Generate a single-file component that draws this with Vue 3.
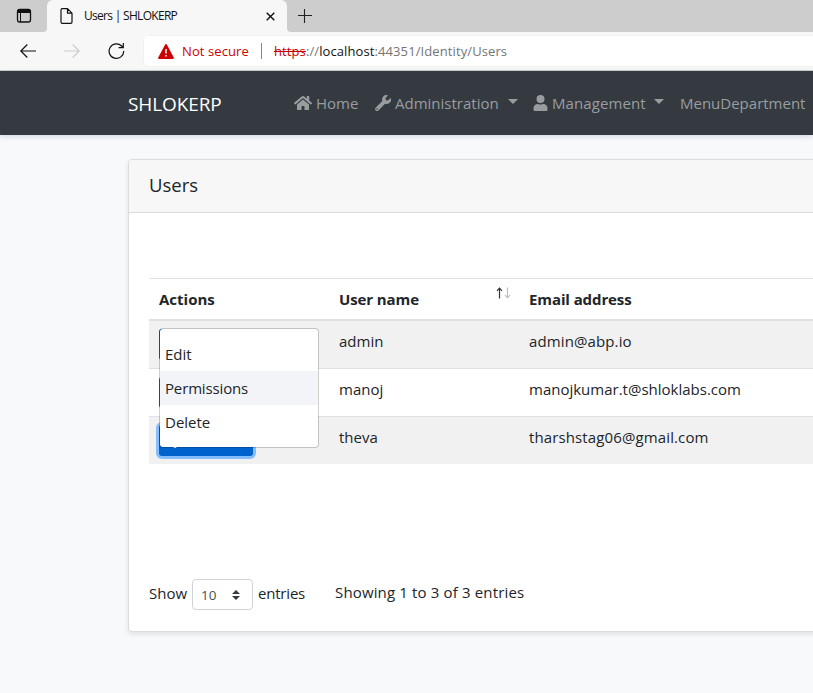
<script setup>
const users = [
  { name: 'admin', email: 'admin@abp.io' },
  { name: 'manoj', email: 'manojkumar.t@shloklabs.com' },
  { name: 'theva', email: 'tharshstag06@gmail.com' },
]
const actions = ['Edit', 'Permissions', 'Delete']
</script>

<template>
  <div class="page">
    <div class="tabstrip">
      <div class="side">
        <svg width="16" height="16" viewBox="0 0 16 16"><rect x="1.5" y="1.5" width="13" height="12.5" rx="2.2" fill="none" stroke="#111" stroke-width="1.3" /><path d="M1.5 5V3.5Q1.5 1.5 3.5 1.5H12.500Q14.500 1.500 14.500 3.500V5Z" fill="#111" /><path d="M4.500 5V14" stroke="#111" stroke-width="1" /></svg>
      </div>
      <div class="tab">
        <svg class="file" width="13" height="16" viewBox="0 0 13 16"><path d="M1 2Q1 .7 2.300 .7H7.500L12 5.200V14Q12 15.300 10.700 15.300H2.300Q1 15.300 1 14ZM7.500 .7V5.200H12" fill="none" stroke="#111" stroke-width="1.2" /></svg>
        <span class="tabtitle">Users | SHLOKERP</span>
        <svg class="close" width="9" height="9" viewBox="0 0 9 9"><path d="M.7 .7L8.300 8.300M8.300 .7L.7 8.300" stroke="#111" stroke-width="1.4" /></svg>
      </div>
      <div class="rest">
        <svg width="14" height="14" viewBox="0 0 14 14"><path d="M6.500 0V14M0 6.500H14" stroke="#222" stroke-width="1.1" /></svg>
      </div>
    </div>

    <div class="toolbar">
      <div class="navbuttons">
        <svg width="16" height="14" viewBox="0 0 16 14"><path d="M7.300 .5L.8 7L7.300 13.500M.8 7H16" fill="none" stroke="#111" stroke-width="1.2" /></svg>
        <svg class="forward" width="16" height="14" viewBox="0 0 16 14"><path d="M8.700 .5L15.200 7L8.700 13.500M15.200 7H0" fill="none" stroke="#ccc" stroke-width="1.2" /></svg>
        <svg class="reload" width="17" height="18" viewBox="0 0 17 18"><path d="M15.700 9A7.300 7.300 0 1 1 13.600 4L15 5.500M15.300 1V5.700H10.600" fill="none" stroke="#111" stroke-width="1.200" /></svg>
      </div>
      <div class="address">
        <svg class="warn" width="16" height="15" viewBox="0 0 16 15"><path d="M8 1L15 14H1Z" fill="#c00" stroke="#c00" stroke-width="1.800" stroke-linejoin="round" /><path d="M8 5V9.600M8 11V12.600" stroke="#fff" stroke-width="1.500" /></svg>
        <span class="insecure">Not secure</span>
        <i class="bar"></i>
        <span class="url"><s>https</s>://<b>localhost</b>:44351/Identity/Users</span>
      </div>
    </div>

    <nav class="navbar">
      <span class="brand">SHLOKERP</span>
      <span class="link home">
        <svg width="18" height="16" viewBox="0 0 576 512"><path d="M280 148L96 300V464a16 16 0 0 0 16 16h112a16 16 0 0 0 16-16v-96a16 16 0 0 1 16-16h64a16 16 0 0 1 16 16v96a16 16 0 0 0 16 16h112a16 16 0 0 0 16-16V300L296 148a12 12 0 0 0-16 0zM571 251L488 183V44a12 12 0 0 0-12-12h-56a12 12 0 0 0-12 12v73L318 43a48 48 0 0 0-61 0L4 251a12 12 0 0 0-1 17l25 31a12 12 0 0 0 17 2L280 107a12 12 0 0 1 16 0l235 194a12 12 0 0 0 17-2l25-31a12 12 0 0 0-2-17z" fill="currentColor" /></svg>
        <span>Home</span>
      </span>
      <span class="link admin">
        <svg width="16" height="16" viewBox="0 0 512 512"><path d="M508 109c-2-9-13-12-19-5l-75 74-68-11-11-68 74-75c7-6 4-17-5-19a144 144 0 0 0-170 187L19 407a64 64 0 0 0 90 90l214-214A144 144 0 0 0 508 109zM64 472a24 24 0 1 1 0-48 24 24 0 0 1 0 48z" fill="currentColor" /></svg>
        <span>Administration</span><i class="caret"></i>
      </span>
      <span class="link manage">
        <svg width="15" height="16" viewBox="0 0 448 512"><path d="M224 256a128 128 0 1 0 0-256 128 128 0 0 0 0 256zm90 32h-17a174 174 0 0 1-146 0h-17A134 134 0 0 0 0 422v42a48 48 0 0 0 48 48h352a48 48 0 0 0 48-48v-42a134 134 0 0 0-134-134z" fill="currentColor" /></svg>
        <span>Management</span><i class="caret"></i>
      </span>
      <span class="link dept"><span>MenuDepartment</span></span>
    </nav>

    <main class="card">
      <header class="cardhead">Users</header>
      <div class="cardbody">
        <div class="table">
          <div class="row head">
            <span class="h1">Actions</span>
            <span class="h2">User name
              <svg class="sort" width="15" height="12" viewBox="0 0 15 12"><path d="M3.500 11.500V1.200M1 3.800L3.500 1.200L6 3.800" fill="none" stroke="#333" stroke-width="1.2" /><path d="M11.500 .5V10.800M9 8.200L11.500 10.800L14 8.200" fill="none" stroke="#bbb" stroke-width="1.1" /></svg>
            </span>
            <span class="h3">Email address</span>
          </div>
          <div v-for="(u, i) in users" :key="u.name" class="row">
            <div class="cell">
              <div class="action" :class="{ focused: i === 2 }">
                <svg width="14" height="14" viewBox="0 0 14 14"><circle cx="7" cy="7" r="3.700" fill="none" stroke="#fff" stroke-width="2.600" /><path d="M7 0V3M7 11V14M0 7H3M11 7H14M2 2L4 4M10 10L12 12M2 12L4 10M10 4L12 2" stroke="#fff" stroke-width="2.600" /></svg>
              </div>
              <div v-if="i === 0" class="menu">
                <div v-for="a in actions" :key="a" class="item" :class="[a.toLowerCase(), { hover: a === 'Permissions' }]"><span>{{ a }}</span></div>
              </div>
            </div>
            <span class="txt" :class="'n' + i">{{ u.name }}</span>
            <span class="txt" :class="'e' + i">{{ u.email }}</span>
          </div>
        </div>
        <footer class="foot">
          <span class="show">Show</span>
          <span class="select"><span>10</span>
            <svg width="8" height="10" viewBox="0 0 8 10"><path d="M4 0L8 4H0ZM0 6H8L4 10Z" fill="#343a40" /></svg>
          </span>
          <span class="entries">entries</span>
          <span class="info">Showing 1 to 3 of 3 entries</span>
        </footer>
      </div>
    </main>
  </div>
</template>

<style>
body { background: #f8f9fb; overflow: hidden; }
</style>

<style scoped>
* { box-sizing: border-box; }
svg { display: block; flex: none; }
.page { width: 813px; height: 693px; overflow: hidden; background: #f8f9fb; font-family: "Open Sans", "Noto Sans", sans-serif; font-size: 15px; line-height: 24px; color: #212529; white-space: nowrap; }
.tabstrip { height: 32px; display: flex; background: #f7f7f7; }
.side { width: 47px; background: #cdcdcd; border-bottom-right-radius: 4px; padding: 8px 0 0 16px; }
.tab { width: 240px; display: flex; align-items: center; padding: 0 12px 0 13px; background: #f7f7f7; border-radius: 6px 6px 0 0; box-shadow: 0 -4px 0 4px #cdcdcd; clip-path: inset(0); }
.tabtitle { font-size: 12px; color: #111; margin-left: 11px; flex: 1; letter-spacing: -.7px; }
.rest { flex: 1; background: #cdcdcd; border-bottom-left-radius: 4px; padding: 9px 0 0 11px; }
.toolbar { height: 39px; display: flex; background: #f7f7f7; border-bottom: 1px solid #c9cfcc; padding-top: 4px; }
.navbuttons { width: 144px; height: 30px; display: flex; align-items: center; padding-left: 20px; flex: none; }
.forward { margin-left: 28px; }
.reload { margin-left: 28px; }
.address { flex: none; width: 700px; height: 30px; background: #fff; border-radius: 4px; box-shadow: 0 0 2px #e4e4e4; display: flex; align-items: center; padding-left: 14px; font-size: 13px; }
.insecure { color: #c00; width: 68px; margin-left: 8px; letter-spacing: .1px; }
.bar { width: 1px; height: 16px; background: #888; margin: 0 12px 0 11px; }
.url { color: #757575; letter-spacing: .1px; }
.url s { color: #c00; }
.url b { font-weight: 400; color: #111; }
.navbar { height: 64px; background: #343a40; display: flex; align-items: center; padding-left: 128px; color: #999da0; position: relative; box-shadow: 0 2px 5px rgba(40, 60, 90, .16); }
.brand { color: #fff; font-size: 19px; letter-spacing: -.1px; width: 165px; flex: none; padding-top: 1px; }
.link { display: flex; align-items: center; flex: none; }
.link svg { margin-right: 5px; }
.home { width: 82px; }
.home svg { margin-left: 1px; margin-right: 4px; }
.admin { width: 158px; }
.admin svg { margin-right: 4px; }
.manage { width: 147px; }
.manage svg { margin-right: 4px; }
.manage span { letter-spacing: .1px; }
.caret { border: 5px solid transparent; border-top-color: currentColor; border-bottom: 0; margin: -3px 0 0 9px; }
.manage .caret { margin-left: 8px; }
.card { margin: 24px 0 0 128px; width: 760px; height: 473px; border: 1px solid #dcdddf; border-radius: 4px; background: #fff; box-shadow: 0 2px 5px rgba(0, 0, 0, .1); }
.cardhead { height: 53px; border-bottom: 1px solid #d9dadb; background: #f7f7f7; border-radius: 3px 3px 0 0; padding: 13px 20px; font-size: 18.500px; font-weight: 500; }
.cardbody { padding: 65px 20px 0; }
.table { border-top: 1px solid #dee2e6; }
.row { display: grid; grid-template-columns: 180px 190px 1fr; height: 48px; padding-left: 10px; border-top: 1px solid #dee2e6; padding-top: 8px; }
.row.head { height: 42px; padding-top: 8px; border-top: 0; border-bottom: 2px solid #dee2e6; font-weight: 700; }
.h2, .h3 { letter-spacing: -.1px; }
.head + .row { border-top: 0; height: 47px; }
.row:nth-child(even) { background: #f1f1f1; }
.h2 { display: flex; justify-content: space-between; padding-right: 18px; }
.cell { position: relative; }
.action { width: 94px; height: 31px; border-radius: 3px; background: #0062cc; padding: 9px 9px; }
.focused { box-shadow: 0 0 0 3px #86bdfc; }
.menu { position: absolute; z-index: 2; left: 0; top: -1px; width: 160px; height: 120px; background: #fff; background-clip: padding-box; border: 1px solid rgba(0, 0, 0, .19); border-radius: 4px; padding: 8px 0; }
.item { height: 34px; padding: 5px 5px; }
.permissions { letter-spacing: -.15px; }
.e0, .e2 { letter-spacing: .12px; }
.hover { background: #f3f4f8; }
.foot { display: flex; align-items: center; margin-top: 115px; height: 31px; }
.show { width: 43px; padding-bottom: 4px; }
.select { width: 61px; height: 31px; border: 1px solid #ced4da; border-radius: 4px; display: flex; align-items: center; justify-content: space-between; padding: 1px 12px 0 8px; font-size: 13.500px; color: #495057; }
.entries { width: 77px; margin-left: 5px; padding-bottom: 4px; letter-spacing: -.2px; }
.info { padding-bottom: 5px; letter-spacing: .15px; }
</style>
